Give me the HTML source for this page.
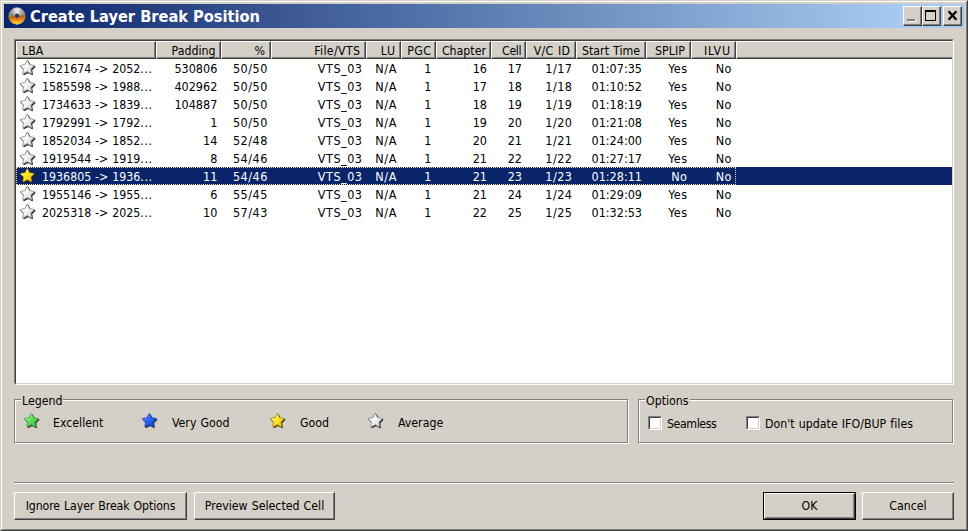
<!DOCTYPE html><html><head><meta charset="utf-8"><title>Create Layer Break Position</title><style>
html,body{margin:0;padding:0}
body{width:968px;height:531px;overflow:hidden;background:#d4d0c8;position:relative;font-family:"DejaVu Sans Condensed","DejaVu Sans","Liberation Sans",sans-serif;font-stretch:condensed;font-size:12.25px;color:#000;word-spacing:0.6px}
div,span{position:absolute;box-sizing:border-box;white-space:nowrap}
.star{position:absolute;overflow:visible}
#frame{left:0;top:0;width:968px;height:531px;border-top:1px solid #d4d0c8;border-left:1px solid #d4d0c8;border-right:1px solid #404040;border-bottom:1px solid #404040}
#frame2{left:1px;top:1px;width:966px;height:529px;border-top:1px solid #fff;border-left:1px solid #fff;border-right:1px solid #808080;border-bottom:1px solid #808080}
#title{left:4px;top:4px;width:960px;height:24px;background:linear-gradient(to right,#0a246a 0%,#a6caf0 93.5%,#a6caf0 100%)}
#ttext{left:30px;top:5px;height:24px;line-height:24px;color:#fff;font-weight:bold;font-size:16.25px;word-spacing:0}
.cb{top:6px;width:20px;height:20px;background:#d4d0c8;border-top:1px solid #fff;border-left:1px solid #fff;border-right:1px solid #404040;border-bottom:1px solid #404040}
.cb i{position:absolute;left:0;top:0;right:0;bottom:0;border-right:1px solid #808080;border-bottom:1px solid #808080}
#lv{left:14px;top:39px;width:940px;height:346px;border-top:1px solid #808080;border-left:1px solid #808080;border-right:1px solid #fff;border-bottom:1px solid #fff}
#lv2{left:15px;top:40px;width:938px;height:344px;background:#fff;border-top:1px solid #404040;border-left:1px solid #404040;border-right:1px solid #d4d0c8;border-bottom:1px solid #d4d0c8}
.hd{top:41px;height:18px;background:#d4d0c8;border-top:1px solid #fff;border-left:1px solid #fff;border-right:1px solid #404040;border-bottom:1px solid #404040;}
.hd i{position:absolute;left:0;top:0;right:0;bottom:0;border-right:1px solid #808080;border-bottom:1px solid #808080}
.hd b{position:absolute;font-weight:normal;top:1px;height:16px;line-height:17px;font-size:12.25px}
.c{height:18px;line-height:18px;font-size:12.5px;margin-top:1px}
.sel{left:16px;top:167px;width:936px;height:18px;background:#0a246a}
.foc{left:16px;top:167px;width:720px;height:18px;border:1px dotted #f5db95;}
.grp{border:1px solid #808080;box-shadow:1px 1px 0 #fff, inset 1px 1px 0 #fff}
.gl{background:#d4d0c8;padding:0 1px;height:14px;line-height:14px}
.btn{top:492px;height:28px;line-height:27px;text-align:center;background:#d4d0c8;border-top:1px solid #fff;border-left:1px solid #fff;border-right:1px solid #404040;border-bottom:1px solid #404040}
.btn i{position:absolute;left:0;top:0;right:0;bottom:0;border-right:1px solid #808080;border-bottom:1px solid #808080}
.chk{top:416px;width:14px;height:14px;background:#fff;border-top:1px solid #808080;border-left:1px solid #808080;border-right:1px solid #fff;border-bottom:1px solid #fff}
.chk i{position:absolute;left:0;top:0;right:0;bottom:0;border-top:1px solid #404040;border-left:1px solid #404040;border-right:1px solid #d4d0c8;border-bottom:1px solid #d4d0c8}
.t{height:16px;line-height:16px}
</style></head><body>
<svg width="0" height="0" style="position:absolute"><defs>
<filter id="sh" x="-30%" y="-30%" width="180%" height="180%"><feGaussianBlur stdDeviation="0.55"/></filter>
<path id="sp" d="M8.25 1.95 L10.28 6.06 L14.81 6.72 L11.53 9.92 L12.31 14.43 L8.25 12.30 L4.19 14.43 L4.97 9.92 L1.69 6.72 L6.22 6.06 Z" stroke-linejoin="round"/>
<linearGradient id="g-gray" x1="0" y1="0" x2="1" y2="1"><stop offset="0" stop-color="#ffffff"/><stop offset="0.5" stop-color="#f4f4f4"/><stop offset="1" stop-color="#c8c8c8"/></linearGradient>
<linearGradient id="g-gold" x1="0" y1="0" x2="1" y2="1"><stop offset="0" stop-color="#fff9a0"/><stop offset="0.45" stop-color="#ffe530"/><stop offset="1" stop-color="#f0c000"/></linearGradient>
<linearGradient id="g-green" x1="0" y1="0" x2="1" y2="1"><stop offset="0" stop-color="#b0ffb0"/><stop offset="0.45" stop-color="#5fe05f"/><stop offset="1" stop-color="#35c035"/></linearGradient>
<linearGradient id="g-blue" x1="0" y1="0" x2="1" y2="1"><stop offset="0" stop-color="#7aa8ff"/><stop offset="0.45" stop-color="#2f66ff"/><stop offset="1" stop-color="#0838d8"/></linearGradient>
<g id="star-gray"><use href="#sp" transform="translate(0.9,1.0)" fill="#303030" stroke="#303030" stroke-width="1.5" filter="url(#sh)" opacity="1"/><use href="#sp" fill="url(#g-gray)" stroke="#6e6e6e" stroke-width="1.6"/><use href="#sp" fill="url(#g-gray)" stroke="url(#g-gray)" stroke-width="0.3"/></g>
<g id="star-gold"><use href="#sp" transform="translate(0.9,1.0)" fill="#2a2200" stroke="#2a2200" stroke-width="1.5" filter="url(#sh)" opacity="0.8"/><use href="#sp" fill="url(#g-gold)" stroke="#8a6a08" stroke-width="1.4"/><use href="#sp" fill="url(#g-gold)" stroke="url(#g-gold)" stroke-width="0.3"/></g>
<g id="star-green"><use href="#sp" transform="translate(0.9,1.0)" fill="#303030" stroke="#303030" stroke-width="1.5" filter="url(#sh)" opacity="0.9"/><use href="#sp" fill="url(#g-green)" stroke="#3c8c3c" stroke-width="1.4"/><use href="#sp" fill="url(#g-green)" stroke="url(#g-green)" stroke-width="0.3"/></g>
<g id="star-blue"><use href="#sp" transform="translate(0.9,1.0)" fill="#303030" stroke="#303030" stroke-width="1.5" filter="url(#sh)" opacity="0.9"/><use href="#sp" fill="url(#g-blue)" stroke="#1838a8" stroke-width="1.4"/><use href="#sp" fill="url(#g-blue)" stroke="url(#g-blue)" stroke-width="0.3"/></g>
<radialGradient id="disc" cx="0.5" cy="0.5" r="0.5"><stop offset="0" stop-color="#223a80"/><stop offset="0.22" stop-color="#223a80"/><stop offset="0.3" stop-color="#c8c8c8"/><stop offset="1" stop-color="#b0b0b0"/></radialGradient>
<linearGradient id="fire" gradientUnits="userSpaceOnUse" x1="0" y1="6.5" x2="0" y2="17.5"><stop offset="0" stop-color="#8a4a24"/><stop offset="0.3" stop-color="#c06418"/><stop offset="0.62" stop-color="#e89018"/><stop offset="0.85" stop-color="#fcc828"/><stop offset="1" stop-color="#fff050"/></linearGradient>
<linearGradient id="shine" x1="0" y1="0" x2="1" y2="0"><stop offset="0" stop-color="#7c7c7c"/><stop offset="0.5" stop-color="#dcdcdc"/><stop offset="1" stop-color="#868686"/></linearGradient>
</defs></svg>
<div id="frame"></div><div id="frame2"></div>
<div id="title"></div>
<svg style="position:absolute;left:8px;top:7px" width="18" height="18" viewBox="0 0 18 18"><defs><clipPath id="dc"><circle cx="9" cy="9" r="8.5"/></clipPath></defs><circle cx="9" cy="9" r="8.5" fill="url(#shine)"/><g clip-path="url(#dc)"><path d="M9 9 L4.5 0 L13.5 0 Z" fill="#fff" opacity=".4"/><path d="M0 10 L2 7.2 L3.2 9 L4.6 6.8 L6 9.2 L7.2 7.8 L9 10 L10.6 7.6 L12 9.2 L13.4 6.8 L14.8 9 L16 7.2 L18 10 L18 18 L0 18 Z" fill="url(#fire)"/><path d="M0.5 8.5 L3.5 6.5 L5 8.5 L2 10 Z" fill="#58b070" opacity=".7"/></g><circle cx="9" cy="8.8" r="2.6" fill="#7a5a50" opacity=".8"/><circle cx="9" cy="8.8" r="1.7" fill="#1a2c68"/><circle cx="9" cy="9" r="8.3" fill="none" stroke="#707070" stroke-width=".5" opacity=".7"/></svg>
<span id="ttext">Create Layer Break Position</span>
<div class="cb" style="left:903px;width:19px"><i></i></div>
<div class="cb" style="left:922px;width:19px"><i></i></div>
<div class="cb" style="left:943px;width:19px"><i></i></div>
<svg style="position:absolute;left:0;top:0" width="968" height="30" shape-rendering="crispEdges"><rect x="908" y="20" width="8" height="2" fill="#fff"/><rect x="907" y="19" width="8" height="2" fill="#808080"/><rect x="925" y="10" width="11" height="2" fill="#000"/><rect x="925" y="10" width="1" height="11" fill="#000"/><rect x="935" y="10" width="1" height="11" fill="#000"/><rect x="925" y="20" width="11" height="1" fill="#000"/></svg>
<svg style="position:absolute;left:0;top:0" width="968" height="30"><path d="M948.6 11.2 L956.4 19.8 M956.4 11.2 L948.6 19.8" stroke="#000" stroke-width="2.3" fill="none"/></svg>
<div id="lv"></div><div id="lv2"></div>
<div class="hd" style="left:16px;width:140px"><i></i><b style="left:5px">LBA</b></div>
<div class="hd" style="left:156px;width:65px"><i></i><b style="right:4.5px;letter-spacing:0px">Padding</b></div>
<div class="hd" style="left:221px;width:50px"><i></i><b style="right:5px;letter-spacing:0px">%</b></div>
<div class="hd" style="left:271px;width:95px"><i></i><b style="right:4.65px;letter-spacing:0.35px">File/VTS</b></div>
<div class="hd" style="left:366px;width:35px"><i></i><b style="right:4.3px;letter-spacing:0.7px">LU</b></div>
<div class="hd" style="left:401px;width:35px"><i></i><b style="right:3.5999999999999996px;letter-spacing:0.4px">PGC</b></div>
<div class="hd" style="left:436px;width:55px"><i></i><b style="right:4px;letter-spacing:0px">Chapter</b></div>
<div class="hd" style="left:491px;width:35px"><i></i><b style="right:3.9000000000000004px;letter-spacing:-0.4px">Cell</b></div>
<div class="hd" style="left:526px;width:50px"><i></i><b style="right:4.7px;letter-spacing:0.3px">V/C ID</b></div>
<div class="hd" style="left:576px;width:70px"><i></i><b style="right:5px;letter-spacing:0px">Start Time</b></div>
<div class="hd" style="left:646px;width:45px"><i></i><b style="right:4.9px;letter-spacing:0.1px">SPLIP</b></div>
<div class="hd" style="left:691px;width:45px"><i></i><b style="right:4.2px;letter-spacing:0.8px">ILVU</b></div>
<div class="hd" style="left:736px;width:216px;border-right:none"><i style="border-right:none"></i></div>
<div class="sel"></div><div class="foc"></div>
<svg class="star" style="left:19px;top:59px" width="18" height="18" viewBox="0 0 18 18"><use href="#star-gray"/></svg>
<span class="c" style="left:42px;top:59px;color:#000;font-size:12.3px;word-spacing:0.3px">1521674 -> 2052<span style="position:static;letter-spacing:.6px">...</span></span>
<span class="c" style="right:750.7px;top:59px;color:#000;letter-spacing:0px">530806</span>
<span class="c" style="right:700.2px;top:59px;color:#000;letter-spacing:0.5px">50/50</span>
<span class="c" style="right:605.5px;top:59px;color:#000;letter-spacing:0.5px">VTS_03</span>
<span class="c" style="right:571.0px;top:59px;color:#000;letter-spacing:0.6px">N/A</span>
<span class="c" style="right:536.5px;top:59px;color:#000;letter-spacing:0px">1</span>
<span class="c" style="right:481px;top:59px;color:#000;letter-spacing:0px">16</span>
<span class="c" style="right:446px;top:59px;color:#000;letter-spacing:0px">17</span>
<span class="c" style="right:395.5px;top:59px;color:#000;letter-spacing:0.5px">1/17</span>
<span class="c" style="right:326px;top:59px;color:#000;letter-spacing:0px">01:07:35</span>
<span class="c" style="right:280.6px;top:59px;color:#000;letter-spacing:0.4px">Yes</span>
<span class="c" style="right:236.29999999999998px;top:59px;color:#000;letter-spacing:0.3px">No</span>
<svg class="star" style="left:19px;top:77px" width="18" height="18" viewBox="0 0 18 18"><use href="#star-gray"/></svg>
<span class="c" style="left:42px;top:77px;color:#000;font-size:12.3px;word-spacing:0.3px">1585598 -> 1988<span style="position:static;letter-spacing:.6px">...</span></span>
<span class="c" style="right:750.7px;top:77px;color:#000;letter-spacing:0px">402962</span>
<span class="c" style="right:700.2px;top:77px;color:#000;letter-spacing:0.5px">50/50</span>
<span class="c" style="right:605.5px;top:77px;color:#000;letter-spacing:0.5px">VTS_03</span>
<span class="c" style="right:571.0px;top:77px;color:#000;letter-spacing:0.6px">N/A</span>
<span class="c" style="right:536.5px;top:77px;color:#000;letter-spacing:0px">1</span>
<span class="c" style="right:481px;top:77px;color:#000;letter-spacing:0px">17</span>
<span class="c" style="right:446px;top:77px;color:#000;letter-spacing:0px">18</span>
<span class="c" style="right:395.5px;top:77px;color:#000;letter-spacing:0.5px">1/18</span>
<span class="c" style="right:326px;top:77px;color:#000;letter-spacing:0px">01:10:52</span>
<span class="c" style="right:280.6px;top:77px;color:#000;letter-spacing:0.4px">Yes</span>
<span class="c" style="right:236.29999999999998px;top:77px;color:#000;letter-spacing:0.3px">No</span>
<svg class="star" style="left:19px;top:95px" width="18" height="18" viewBox="0 0 18 18"><use href="#star-gray"/></svg>
<span class="c" style="left:42px;top:95px;color:#000;font-size:12.3px;word-spacing:0.3px">1734633 -> 1839<span style="position:static;letter-spacing:.6px">...</span></span>
<span class="c" style="right:750.7px;top:95px;color:#000;letter-spacing:0px">104887</span>
<span class="c" style="right:700.2px;top:95px;color:#000;letter-spacing:0.5px">50/50</span>
<span class="c" style="right:605.5px;top:95px;color:#000;letter-spacing:0.5px">VTS_03</span>
<span class="c" style="right:571.0px;top:95px;color:#000;letter-spacing:0.6px">N/A</span>
<span class="c" style="right:536.5px;top:95px;color:#000;letter-spacing:0px">1</span>
<span class="c" style="right:481px;top:95px;color:#000;letter-spacing:0px">18</span>
<span class="c" style="right:446px;top:95px;color:#000;letter-spacing:0px">19</span>
<span class="c" style="right:395.5px;top:95px;color:#000;letter-spacing:0.5px">1/19</span>
<span class="c" style="right:326px;top:95px;color:#000;letter-spacing:0px">01:18:19</span>
<span class="c" style="right:280.6px;top:95px;color:#000;letter-spacing:0.4px">Yes</span>
<span class="c" style="right:236.29999999999998px;top:95px;color:#000;letter-spacing:0.3px">No</span>
<svg class="star" style="left:19px;top:113px" width="18" height="18" viewBox="0 0 18 18"><use href="#star-gray"/></svg>
<span class="c" style="left:42px;top:113px;color:#000;font-size:12.3px;word-spacing:0.3px">1792991 -> 1792<span style="position:static;letter-spacing:.6px">...</span></span>
<span class="c" style="right:750.7px;top:113px;color:#000;letter-spacing:0px">1</span>
<span class="c" style="right:700.2px;top:113px;color:#000;letter-spacing:0.5px">50/50</span>
<span class="c" style="right:605.5px;top:113px;color:#000;letter-spacing:0.5px">VTS_03</span>
<span class="c" style="right:571.0px;top:113px;color:#000;letter-spacing:0.6px">N/A</span>
<span class="c" style="right:536.5px;top:113px;color:#000;letter-spacing:0px">1</span>
<span class="c" style="right:481px;top:113px;color:#000;letter-spacing:0px">19</span>
<span class="c" style="right:446px;top:113px;color:#000;letter-spacing:0px">20</span>
<span class="c" style="right:395.5px;top:113px;color:#000;letter-spacing:0.5px">1/20</span>
<span class="c" style="right:326px;top:113px;color:#000;letter-spacing:0px">01:21:08</span>
<span class="c" style="right:280.6px;top:113px;color:#000;letter-spacing:0.4px">Yes</span>
<span class="c" style="right:236.29999999999998px;top:113px;color:#000;letter-spacing:0.3px">No</span>
<svg class="star" style="left:19px;top:131px" width="18" height="18" viewBox="0 0 18 18"><use href="#star-gray"/></svg>
<span class="c" style="left:42px;top:131px;color:#000;font-size:12.3px;word-spacing:0.3px">1852034 -> 1852<span style="position:static;letter-spacing:.6px">...</span></span>
<span class="c" style="right:750.7px;top:131px;color:#000;letter-spacing:0px">14</span>
<span class="c" style="right:700.2px;top:131px;color:#000;letter-spacing:0.5px">52/48</span>
<span class="c" style="right:605.5px;top:131px;color:#000;letter-spacing:0.5px">VTS_03</span>
<span class="c" style="right:571.0px;top:131px;color:#000;letter-spacing:0.6px">N/A</span>
<span class="c" style="right:536.5px;top:131px;color:#000;letter-spacing:0px">1</span>
<span class="c" style="right:481px;top:131px;color:#000;letter-spacing:0px">20</span>
<span class="c" style="right:446px;top:131px;color:#000;letter-spacing:0px">21</span>
<span class="c" style="right:395.5px;top:131px;color:#000;letter-spacing:0.5px">1/21</span>
<span class="c" style="right:326px;top:131px;color:#000;letter-spacing:0px">01:24:00</span>
<span class="c" style="right:280.6px;top:131px;color:#000;letter-spacing:0.4px">Yes</span>
<span class="c" style="right:236.29999999999998px;top:131px;color:#000;letter-spacing:0.3px">No</span>
<svg class="star" style="left:19px;top:149px" width="18" height="18" viewBox="0 0 18 18"><use href="#star-gray"/></svg>
<span class="c" style="left:42px;top:149px;color:#000;font-size:12.3px;word-spacing:0.3px">1919544 -> 1919<span style="position:static;letter-spacing:.6px">...</span></span>
<span class="c" style="right:750.7px;top:149px;color:#000;letter-spacing:0px">8</span>
<span class="c" style="right:700.2px;top:149px;color:#000;letter-spacing:0.5px">54/46</span>
<span class="c" style="right:605.5px;top:149px;color:#000;letter-spacing:0.5px">VTS_03</span>
<span class="c" style="right:571.0px;top:149px;color:#000;letter-spacing:0.6px">N/A</span>
<span class="c" style="right:536.5px;top:149px;color:#000;letter-spacing:0px">1</span>
<span class="c" style="right:481px;top:149px;color:#000;letter-spacing:0px">21</span>
<span class="c" style="right:446px;top:149px;color:#000;letter-spacing:0px">22</span>
<span class="c" style="right:395.5px;top:149px;color:#000;letter-spacing:0.5px">1/22</span>
<span class="c" style="right:326px;top:149px;color:#000;letter-spacing:0px">01:27:17</span>
<span class="c" style="right:280.6px;top:149px;color:#000;letter-spacing:0.4px">Yes</span>
<span class="c" style="right:236.29999999999998px;top:149px;color:#000;letter-spacing:0.3px">No</span>
<svg class="star" style="left:19px;top:167px" width="18" height="18" viewBox="0 0 18 18"><use href="#star-gold"/></svg>
<span class="c" style="left:42px;top:167px;color:#fff;font-size:12.3px;word-spacing:0.3px">1936805 -> 1936<span style="position:static;letter-spacing:.6px">...</span></span>
<span class="c" style="right:750.7px;top:167px;color:#fff;letter-spacing:0px">11</span>
<span class="c" style="right:700.2px;top:167px;color:#fff;letter-spacing:0.5px">54/46</span>
<span class="c" style="right:605.5px;top:167px;color:#fff;letter-spacing:0.5px">VTS_03</span>
<span class="c" style="right:571.0px;top:167px;color:#fff;letter-spacing:0.6px">N/A</span>
<span class="c" style="right:536.5px;top:167px;color:#fff;letter-spacing:0px">1</span>
<span class="c" style="right:481px;top:167px;color:#fff;letter-spacing:0px">21</span>
<span class="c" style="right:446px;top:167px;color:#fff;letter-spacing:0px">23</span>
<span class="c" style="right:395.5px;top:167px;color:#fff;letter-spacing:0.5px">1/23</span>
<span class="c" style="right:326px;top:167px;color:#fff;letter-spacing:0px">01:28:11</span>
<span class="c" style="right:280.6px;top:167px;color:#fff;letter-spacing:0.4px">No</span>
<span class="c" style="right:236.29999999999998px;top:167px;color:#fff;letter-spacing:0.3px">No</span>
<svg class="star" style="left:19px;top:185px" width="18" height="18" viewBox="0 0 18 18"><use href="#star-gray"/></svg>
<span class="c" style="left:42px;top:185px;color:#000;font-size:12.3px;word-spacing:0.3px">1955146 -> 1955<span style="position:static;letter-spacing:.6px">...</span></span>
<span class="c" style="right:750.7px;top:185px;color:#000;letter-spacing:0px">6</span>
<span class="c" style="right:700.2px;top:185px;color:#000;letter-spacing:0.5px">55/45</span>
<span class="c" style="right:605.5px;top:185px;color:#000;letter-spacing:0.5px">VTS_03</span>
<span class="c" style="right:571.0px;top:185px;color:#000;letter-spacing:0.6px">N/A</span>
<span class="c" style="right:536.5px;top:185px;color:#000;letter-spacing:0px">1</span>
<span class="c" style="right:481px;top:185px;color:#000;letter-spacing:0px">21</span>
<span class="c" style="right:446px;top:185px;color:#000;letter-spacing:0px">24</span>
<span class="c" style="right:395.5px;top:185px;color:#000;letter-spacing:0.5px">1/24</span>
<span class="c" style="right:326px;top:185px;color:#000;letter-spacing:0px">01:29:09</span>
<span class="c" style="right:280.6px;top:185px;color:#000;letter-spacing:0.4px">Yes</span>
<span class="c" style="right:236.29999999999998px;top:185px;color:#000;letter-spacing:0.3px">No</span>
<svg class="star" style="left:19px;top:203px" width="18" height="18" viewBox="0 0 18 18"><use href="#star-gray"/></svg>
<span class="c" style="left:42px;top:203px;color:#000;font-size:12.3px;word-spacing:0.3px">2025318 -> 2025<span style="position:static;letter-spacing:.6px">...</span></span>
<span class="c" style="right:750.7px;top:203px;color:#000;letter-spacing:0px">10</span>
<span class="c" style="right:700.2px;top:203px;color:#000;letter-spacing:0.5px">57/43</span>
<span class="c" style="right:605.5px;top:203px;color:#000;letter-spacing:0.5px">VTS_03</span>
<span class="c" style="right:571.0px;top:203px;color:#000;letter-spacing:0.6px">N/A</span>
<span class="c" style="right:536.5px;top:203px;color:#000;letter-spacing:0px">1</span>
<span class="c" style="right:481px;top:203px;color:#000;letter-spacing:0px">22</span>
<span class="c" style="right:446px;top:203px;color:#000;letter-spacing:0px">25</span>
<span class="c" style="right:395.5px;top:203px;color:#000;letter-spacing:0.5px">1/25</span>
<span class="c" style="right:326px;top:203px;color:#000;letter-spacing:0px">01:32:53</span>
<span class="c" style="right:280.6px;top:203px;color:#000;letter-spacing:0.4px">Yes</span>
<span class="c" style="right:236.29999999999998px;top:203px;color:#000;letter-spacing:0.3px">No</span>
<div class="grp" style="left:14px;top:399px;width:614px;height:44px"></div>
<span class="gl" style="left:21px;top:394px">Legend</span>
<svg class="star" style="left:23px;top:412px" width="18" height="18" viewBox="0 0 18 18"><use href="#star-green"/></svg>
<span class="t" style="left:53px;top:415px">Excellent</span>
<svg class="star" style="left:141px;top:412px" width="18" height="18" viewBox="0 0 18 18"><use href="#star-blue"/></svg>
<span class="t" style="left:172px;top:415px">Very Good</span>
<svg class="star" style="left:269px;top:412px" width="18" height="18" viewBox="0 0 18 18"><use href="#star-gold"/></svg>
<span class="t" style="left:300px;top:415px">Good</span>
<svg class="star" style="left:367px;top:412px" width="18" height="18" viewBox="0 0 18 18"><use href="#star-gray"/></svg>
<span class="t" style="left:398px;top:415px">Average</span>
<div class="grp" style="left:638px;top:399px;width:315px;height:44px"></div>
<span class="gl" style="left:645px;top:394px">Options</span>
<div class="chk" style="left:648px"><i></i></div><span class="t" style="left:667px;top:416px;letter-spacing:-0.4px">Seamless</span>
<div class="chk" style="left:746px"><i></i></div><span class="t" style="left:765px;top:416px;letter-spacing:0.02px">Don't update IFO/BUP files</span>
<div style="left:14px;top:482px;width:940px;height:2px;border-top:1px solid #808080;border-bottom:1px solid #fff"></div>
<div class="btn" style="left:14px;width:173px"><i></i><span style="position:static;letter-spacing:-0.1px">Ignore Layer Break Options</span></div>
<div class="btn" style="left:194px;width:141px"><i></i>Preview Selected Cell</div>
<div style="left:763px;top:492px;width:93px;height:28px;background:#000"></div>
<div class="btn" style="left:764px;top:493px;width:91px;height:26px;line-height:25px"><i></i>OK</div>
<div class="btn" style="left:862px;width:92px"><i></i>Cancel</div>
</body></html>
